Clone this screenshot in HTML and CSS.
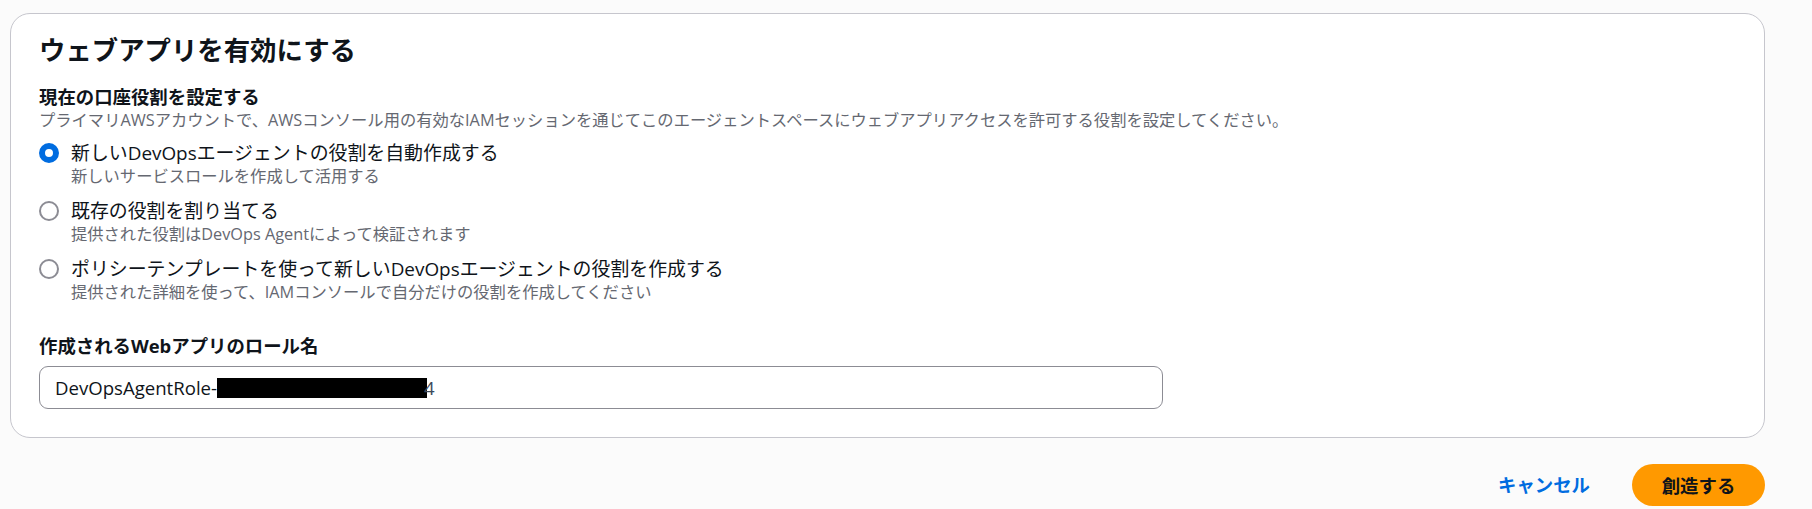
FILE: index.html
```html
<!DOCTYPE html>
<html lang="ja">
<head>
<meta charset="utf-8">
<title>ウェブアプリを有効にする</title>
<link rel="stylesheet" href="styles.css">
</head>
<body>
<main class="page">
  <section class="card">
    <h2 class="title">ウェブアプリを有効にする</h2>
    <div class="field">
      <div class="field-label">現在の口座役割を設定する</div>
      <div class="field-desc">プライマリAWSアカウントで、AWSコンソール用の有効なIAMセッションを通じてこのエージェントスペースにウェブアプリアクセスを許可する役割を設定してください。</div>
      <div class="radios">
        <div class="radio">
          <span class="radio-ctrl checked"></span>
          <span class="radio-text">
            <span class="radio-label">新しいDevOpsエージェントの役割を自動作成する</span>
            <span class="radio-sub">新しいサービスロールを作成して活用する</span>
          </span>
        </div>
        <div class="radio">
          <span class="radio-ctrl"></span>
          <span class="radio-text">
            <span class="radio-label">既存の役割を割り当てる</span>
            <span class="radio-sub">提供された役割はDevOps Agentによって検証されます</span>
          </span>
        </div>
        <div class="radio">
          <span class="radio-ctrl"></span>
          <span class="radio-text">
            <span class="radio-label">ポリシーテンプレートを使って新しいDevOpsエージェントの役割を作成する</span>
            <span class="radio-sub">提供された詳細を使って、IAMコンソールで自分だけの役割を作成してください</span>
          </span>
        </div>
      </div>
    </div>
    <div class="field field-name">
      <div class="field-label">作成されるWebアプリのロール名</div>
      <div class="input">DevOpsAgentRole-<span class="redact"></span><span class="tail">4</span></div>
    </div>
  </section>
  <div class="actions">
    <button class="btn-link" type="button">キャンセル</button>
    <button class="btn-primary" type="button">創造する</button>
  </div>
</main>
</body>
</html>
```

FILE: styles.css
```css
* { box-sizing: border-box; }

html, body {
  margin: 0;
  padding: 0;
  background: #fbfbfb;
}

body {
  font-family: "Open Sans", "Noto Sans CJK JP", sans-serif;
  color: #0f141a;
}

.page {
  padding: 13px 47px 0 10px;
}

.card {
  background: #ffffff;
  border: 1px solid #c6c6cd;
  border-radius: 20px;
  padding: 18px 28px 28px 28px;
}

.title {
  margin: 0;
  font-size: 26.4px;
  line-height: 36px;
  font-weight: 700;
  color: #0f141a;
}

.field {
  margin-top: 17px;
}

.field-label {
  font-size: 18.4px;
  line-height: 24px;
  font-weight: 700;
  color: #0f141a;
}

.field-desc {
  font-size: 16.3px;
  line-height: 22px;
  color: #656871;
  white-space: nowrap;
}

.radios {
  margin-top: 10px;
  display: flex;
  flex-direction: column;
  gap: 11px;
}

.radio {
  display: flex;
  align-items: flex-start;
  gap: 12px;
}

.radio-ctrl {
  flex: none;
  width: 20px;
  height: 20px;
  margin-top: 2px;
  border-radius: 50%;
  border: 2px solid #8c8c94;
  background: #ffffff;
}

.radio-ctrl.checked {
  border: 6px solid #006ce0;
  background: #ffffff;
}

.radio-text {
  display: flex;
  flex-direction: column;
}

.radio-label {
  font-size: 18.9px;
  line-height: 24px;
  color: #0f141a;
}

.radio-sub {
  font-size: 16.3px;
  line-height: 23px;
  color: #656871;
}

.field-name {
  margin-top: 30px;
}

.input {
  margin-top: 8px;
  width: 1124px;
  height: 43px;
  border: 1px solid #8c8c94;
  border-radius: 9px;
  padding: 0 15px;
  display: flex;
  align-items: center;
  font-size: 18.6px;
  color: #0f141a;
  background: #ffffff;
}

.redact {
  display: inline-block;
  width: 210px;
  height: 20px;
  background: #000000;
}

.tail {
  margin-left: -3px;
  color: #3d4a5c;
}

.actions {
  margin-top: 26px;
  display: flex;
  justify-content: flex-end;
  align-items: center;
  gap: 42px;
}

.btn-link {
  border: none;
  background: none;
  padding: 0;
  font-family: inherit;
  font-size: 18.4px;
  line-height: 24px;
  font-weight: 700;
  color: #006ce0;
  cursor: pointer;
}

.btn-primary {
  border: none;
  height: 42px;
  width: 133px;
  border-radius: 21px;
  background: #ff9900;
  font-family: inherit;
  font-size: 18.4px;
  font-weight: 700;
  color: #0f141a;
  cursor: pointer;
}
```
